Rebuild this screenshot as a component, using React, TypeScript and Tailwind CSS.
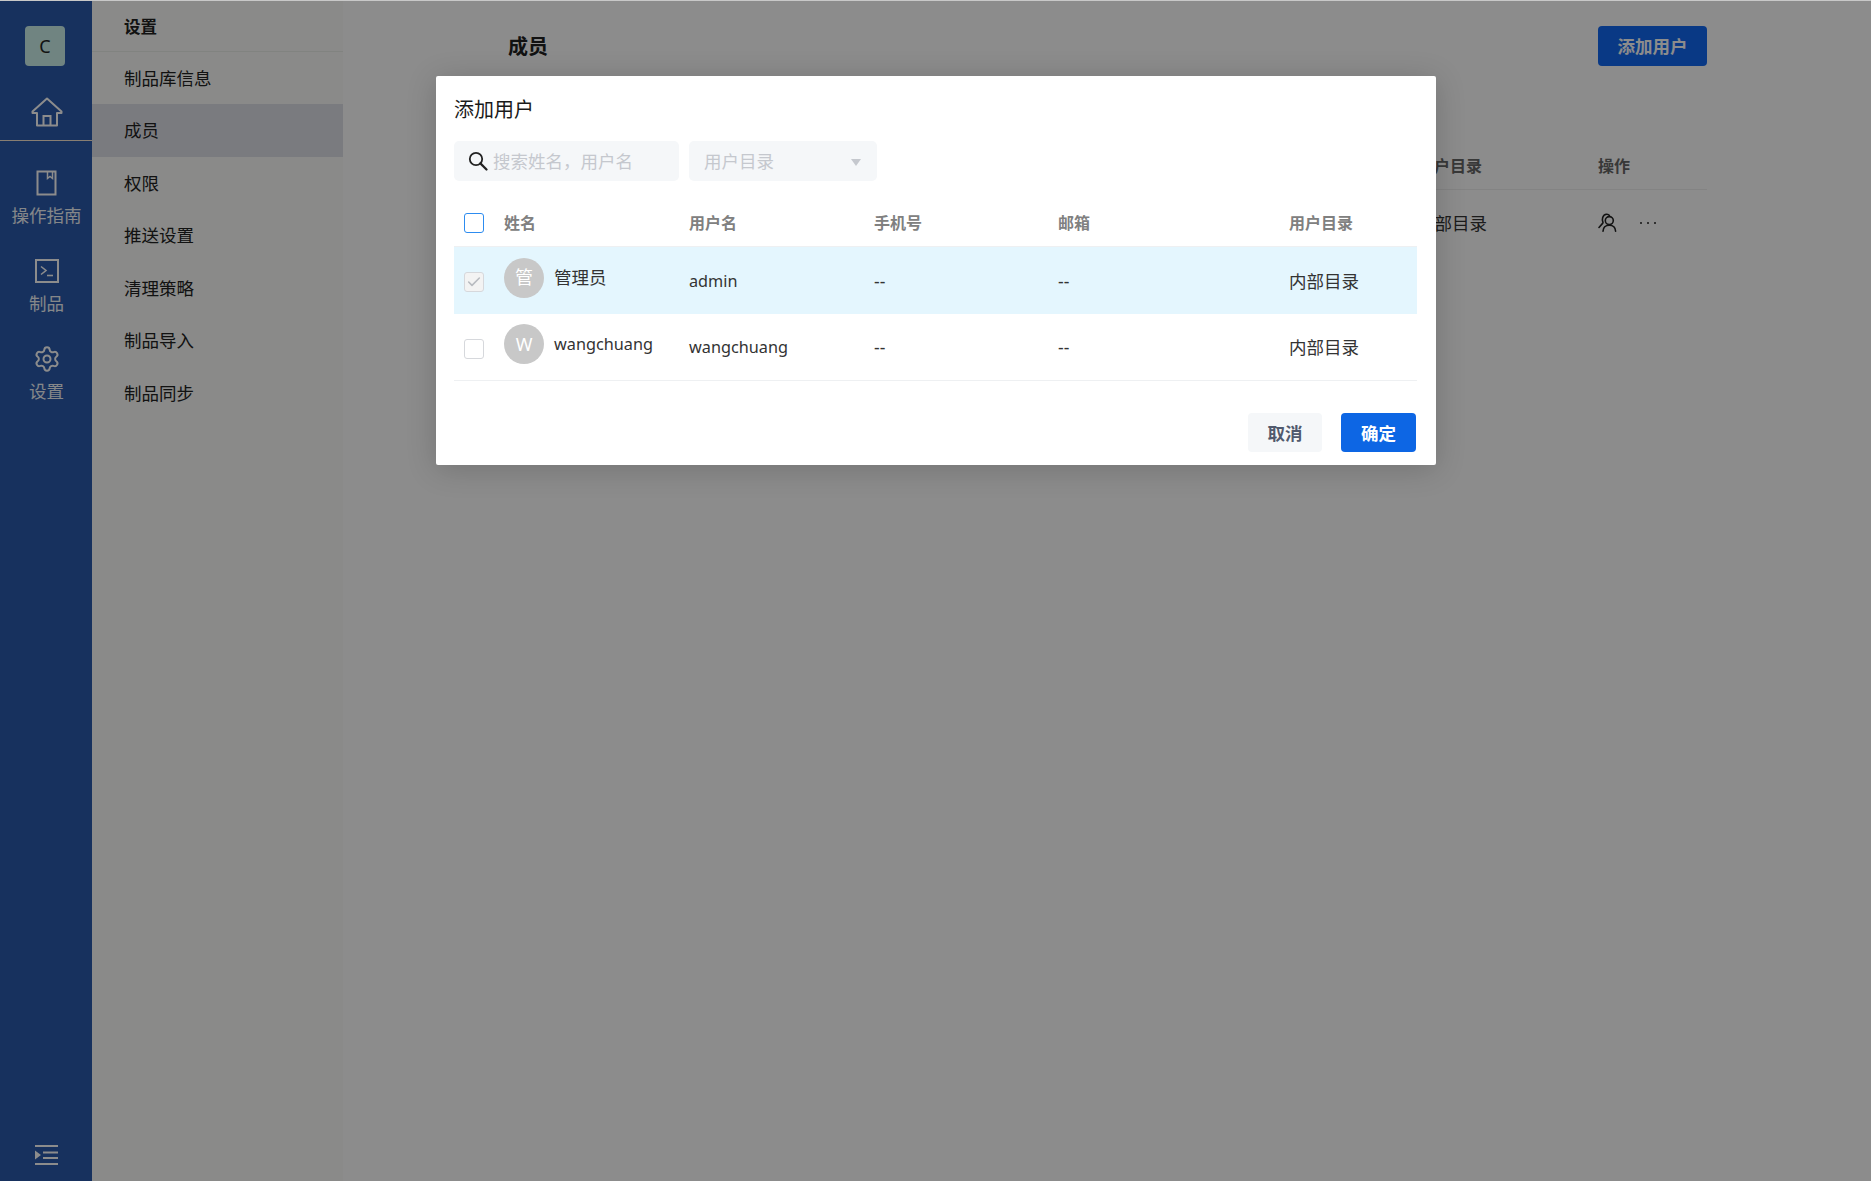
import { Settings, Check } from "lucide-react";

const font = "font-['Noto_Sans','Noto_Sans_CJK_SC',sans-serif]";
const menu = ["制品库信息", "成员", "权限", "推送设置", "清理策略", "制品导入", "制品同步"];
const rows = [
  { av: "管", name: "管理员", user: "admin", selected: true, latin: false },
  { av: "W", name: "wangchuang", user: "wangchuang", selected: false, latin: true },
];
const grid = "grid grid-cols-[50px_185px_185px_184px_231px_128px]";

function NavItem({ icon, label }: { icon: React.ReactNode; label: string }) {
  return (
    <div className="flex flex-col items-center h-[88px] pt-[8px]">
      <div className="h-[32px] flex items-center justify-center">{icon}</div>
      <div className="mt-[4px] text-[17.5px] leading-[24px] text-[#f2f6fa]">{label}</div>
    </div>
  );
}

export default function App() {
  return (
    <div className={`${font} w-[1871px] h-[1181px] overflow-hidden bg-white`}>
      <div className="h-px bg-[#c8c8c8]" />
      <div className="relative flex h-[1180px]">
        <aside className="w-[92px] shrink-0 bg-[#2a59ab] flex flex-col">
          <div className="h-[139px] border-b border-[#f8e6d0] flex flex-col items-center box-content">
            <div className="mt-[25px] ml-[-2px] w-[40px] h-[40px] rounded-[4px] bg-[#cdf0eb] flex items-center justify-center text-[18px] text-[#222]">C</div>
            <svg className="mt-[31px] ml-[1px]" width="32" height="30" viewBox="0 0 32 30" fill="none" stroke="#fff" strokeWidth="2">
              <path d="M16 1.5 1.5 14.5V16H6V28.5H26V16H30.5V14.5Z" strokeLinejoin="round" />
              <path d="M12.5 28.5V19H19.5V28.5" />
            </svg>
          </div>
          <div className="mt-[18px] pl-[1px]">
            <NavItem
              label="操作指南"
              icon={
                <svg width="21" height="26" viewBox="0 0 21 26" fill="none" stroke="#fff" strokeWidth="2">
                  <path d="M1.5 1.5H19.5V24.5H1.5Z" />
                  <path d="M11.5 1.5V8.5L14 6.5 16.5 8.5V1.5" strokeWidth="1.5" />
                </svg>
              }
            />
            <NavItem
              label="制品"
              icon={
                <svg width="24" height="24" viewBox="0 0 24 24" fill="none" stroke="#fff" strokeWidth="2">
                  <path d="M1 1H23V23H1Z" />
                  <path d="M6 7.5 11 11.5 6 15.5" strokeWidth="1.6" />
                  <path d="M12 16.5H18" strokeWidth="1.6" />
                </svg>
              }
            />
            <NavItem label="设置" icon={<Settings size={28} strokeWidth={1.7} color="#fff" />} />
          </div>
          <div className="mt-auto mb-[15px] flex justify-center">
            <svg width="24" height="22" viewBox="0 0 24 22" fill="none" stroke="#fff" strokeWidth="2">
              <path d="M1 2H24M9 8.5H24M9 14H24M1 20H24" />
              <path d="M1 6.5 7 11 1 15.5Z" fill="#fff" stroke="none" />
            </svg>
          </div>
        </aside>
        <nav className="w-[251px] shrink-0 bg-[#fbfcf9] text-[#222]">
          <div className="h-[50.5px] pl-[32px] border-b border-[#eceee9] text-[16.5px] font-bold leading-[52px]">设置</div>
          <div>
            {menu.map((m) => (
              <div key={m} className={`h-[52.5px] pl-[32px] flex items-center text-[17.5px] ${m === "成员" ? "bg-[#dfe1e8]" : ""}`}>
                {m}
              </div>
            ))}
          </div>
        </nav>
        <main className="flex-1 pl-[165px] pr-[164px] text-[#333]">
          <div className="flex items-center justify-between h-[40px] mt-[25px]">
            <div className="text-[20px] font-bold text-[#222] pt-[2px]">成员</div>
            <button className="w-[109px] h-[40px] rounded-[4px] bg-[#1268f2] text-white text-[17.5px] font-bold">添加用户</button>
          </div>
          <div className="mt-[58px] h-[66px] border-b border-[#eee] flex justify-end items-start pt-[30px] text-[16px] font-bold text-[#666]">
            <span className="mr-[116px]">用户目录</span>
            <span className="mr-[77px]">操作</span>
          </div>
          <div className="flex justify-end items-center h-[67px] text-[17.5px]">
            <span className="mr-[111px]">内部目录</span>
            <div className="flex items-center w-[109px] gap-[22px] pb-[2px]">
              <svg width="20" height="19" viewBox="0 0 20 19" fill="none" stroke="#222" strokeWidth="1.6" strokeLinecap="round">
                <path d="M5 9.5C3.6 7 4.4 1.5 8.6 1.2c1.2-.1 2.2.4 2.8 1.2" />
                <path d="M4.6 10.4 1 14.5" />
                <circle cx="11.3" cy="7.6" r="4" />
                <path d="M5 18.2c.2-3.6 2.6-6 6.3-6 3.7 0 6.1 2.4 6.3 6" />
              </svg>
              <div className="flex gap-[5px]">
                <span className="w-[2px] h-[2px] rounded-full bg-[#222]" />
                <span className="w-[2px] h-[2px] rounded-full bg-[#222]" />
                <span className="w-[2px] h-[2px] rounded-full bg-[#222]" />
              </div>
            </div>
          </div>
        </main>

        <div className="absolute inset-0 bg-black/45 flex justify-center items-start pt-[75px]">
          <div className="w-[1000px] h-[389px] ml-px bg-white rounded-[2px] shadow-[0_4px_30px_rgba(0,0,0,0.18)] px-[16px] flex flex-col">
            <div className="pt-[20px] pl-[2px] h-[65px] text-[20px] leading-[28px] text-[#1a1a1a]">添加用户</div>
            <div className="flex gap-[10px] ml-[2px]">
              <div className="w-[225px] h-[40px] rounded-[5px] bg-[#f5f7f9] flex items-center pl-[14px] text-[17.5px] text-[#c5c8ce]">
                <svg width="20" height="20" viewBox="0 0 20 20" fill="none" stroke="#222" strokeWidth="1.8">
                  <circle cx="8" cy="8" r="6.2" />
                  <path d="M12.4 12.4 18.5 18.5" strokeWidth="2.2" strokeLinecap="round" />
                </svg>
                <span className="ml-[5px]">搜索姓名，用户名</span>
              </div>
              <div className="w-[188px] h-[40px] rounded-[5px] bg-[#f5f7f9] flex items-center justify-between pl-[15px] pr-[16px] text-[17.5px] text-[#c5c8ce]">
                <span>用户目录</span>
                <span className="w-0 h-0 border-x-[5.5px] border-x-transparent border-t-[7px] border-t-[#c5c8ce] mt-[2px]" />
              </div>
            </div>
            <div className="ml-[2px] w-[963px]">
              <div className={`${grid} h-[66px] pt-[19px] items-center border-b border-[#eef0f2] text-[16px] font-bold text-[#808080]`}>
                <div className="pl-[10px]">
                  <div className="w-[20px] h-[20px] rounded-[3px] border border-[#2d8cf0] bg-white" />
                </div>
                <div>姓名</div>
                <div>用户名</div>
                <div>手机号</div>
                <div>邮箱</div>
                <div>用户目录</div>
              </div>
              {rows.map((r) => (
                <div key={r.user} className={`${grid} h-[67px] items-center text-[17.5px] text-[#333] ${r.selected ? "bg-[#e4f6fe]" : "border-b border-[#eef0f2]"}`}>
                  <div className="pl-[10px] pt-[3px]">
                    <div className={`w-[20px] h-[20px] rounded-[3px] border border-[#d6d8dc] flex items-center justify-center ${r.selected ? "bg-[#f3f3f3]" : "bg-white"}`}>
                      {r.selected && <Check size={16} strokeWidth={2.4} color="#b8bbc0" />}
                    </div>
                  </div>
                  <div className="flex items-center mt-[-6px]">
                    <div className="w-[40px] h-[40px] rounded-full bg-[#c8c8c8] text-white flex items-center justify-center text-[18px]">{r.av}</div>
                    <span className={`ml-[10px] ${r.latin ? "text-[16.25px]" : "text-[17.5px]"}`}>{r.name}</span>
                  </div>
                  <div className="pt-[1px] text-[16.25px]">{r.user}</div>
                  <div className="pt-[1px]">--</div>
                  <div className="pt-[1px]">--</div>
                  <div className="pt-[1px]">内部目录</div>
                </div>
              ))}
            </div>
            <div className="flex justify-end gap-[19px] mt-[32px] mr-[4px]">
              <button className="w-[74px] h-[39px] rounded-[4px] bg-[#f5f7f9] pt-[1px] text-[17.5px] font-bold text-[#515a6e]">取消</button>
              <button className="w-[75px] h-[39px] rounded-[4px] bg-[#0d66e4] pt-[1px] text-[17.5px] font-bold text-white">确定</button>
            </div>
          </div>
        </div>
      </div>
    </div>
  );
}
